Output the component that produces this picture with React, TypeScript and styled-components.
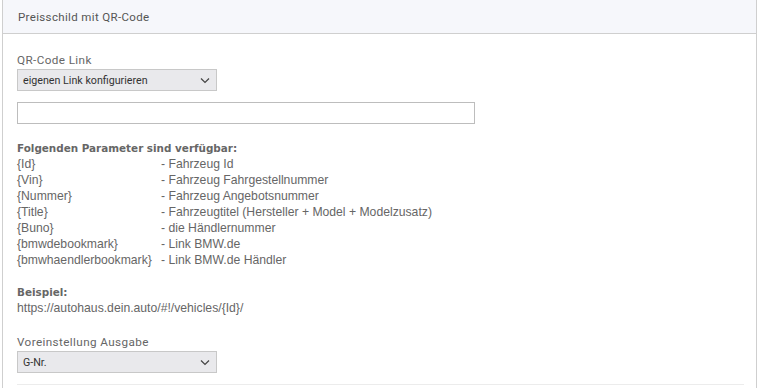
import React from "react";
import styled, { createGlobalStyle } from "styled-components";

const Global = createGlobalStyle`
  html, body { margin: 0; padding: 0; background: #fff; }
  body { font-family: Roboto, "Liberation Sans", sans-serif; }
`;

const Panel = styled.div`
  margin-left: 2px;
  width: 753px;
  height: 388px;
  border-left: 1px solid #cfcfcf;
  border-right: 1px solid #cfcfcf;
  box-sizing: content-box;
  overflow: hidden;
`;

const Header = styled.div`
  height: 33px;
  background: #f6f7fb;
  border-bottom: 1px solid #cfcfcf;
  display: flex;
  align-items: center;
  padding-left: 15px;
  font-family: Roboto, "Liberation Sans", sans-serif;
  font-size: 11.5px;
  letter-spacing: 0.35px;
  color: #555;
`;

const Body = styled.div`
  padding: 18px 11px 0 14px;
  display: flex;
  flex-direction: column;
`;

const Label = styled.div`
  font-family: Roboto, "Liberation Sans", sans-serif;
  font-size: 11.7px;
  letter-spacing: 0.4px;
  color: #666;
  line-height: 16px;
  margin-bottom: 1px;
`;

const SelectBox = styled.div`
  width: 200px;
  height: 22px;
  box-sizing: border-box;
  border: 1px solid #c8c8c8;
  background: #e9e9ec;
  display: flex;
  align-items: center;
  justify-content: space-between;
  padding: 0 6px 0 5px;
  font-family: Roboto, "Liberation Sans", sans-serif;
  font-size: 10.7px;
  color: #333;
`;

const TextInput = styled.div`
  width: 458px;
  height: 22px;
  box-sizing: border-box;
  border: 1px solid #bdbdbd;
  background: #fff;
  margin-top: 11px;
`;

const Info = styled.div`
  margin-top: 16px;
  font-family: "Liberation Sans", Arial, sans-serif;
  font-size: 12.2px;
  line-height: 16px;
  color: #666;
`;

const Strong = styled.div`
  font-family: "DejaVu Sans", "Liberation Sans", sans-serif;
  font-weight: bold;
  font-size: 10.4px;
  color: #666;
  line-height: 16px;
`;

const ParamRow = styled.div`
  display: grid;
  grid-template-columns: 144px auto;
  white-space: nowrap;
`;

const Example = styled.div`
  margin-top: 16px;
  font-family: "Liberation Sans", Arial, sans-serif;
  font-size: 12.2px;
  line-height: 16px;
  color: #666;
`;

const Field = styled.div`
  margin-top: 18px;
`;

const Divider = styled.div`
  margin-top: 11px;
  height: 1px;
  width: 727px;
  background: #ececec;
`;

const Chevron = () => (
  <svg width="10" height="7" viewBox="0 0 10 7">
    <path d="M1 1.5 L5 5.5 L9 1.5" fill="none" stroke="#444" strokeWidth="1.2" />
  </svg>
);

const params: [string, string][] = [
  ["{Id}", "- Fahrzeug Id"],
  ["{Vin}", "- Fahrzeug Fahrgestellnummer"],
  ["{Nummer}", "- Fahrzeug Angebotsnummer"],
  ["{Title}", "- Fahrzeugtitel (Hersteller + Model + Modelzusatz)"],
  ["{Buno}", "- die Händlernummer"],
  ["{bmwdebookmark}", "- Link BMW.de"],
  ["{bmwhaendlerbookmark}", "- Link BMW.de Händler"],
];

export default function App() {
  return (
    <>
      <Global />
      <Panel>
        <Header>Preisschild mit QR-Code</Header>
        <Body>
          <Label>QR-Code Link</Label>
          <SelectBox>
            <span>eigenen Link konfigurieren</span>
            <Chevron />
          </SelectBox>
          <TextInput />
          <Info>
            <Strong>Folgenden Parameter sind verfügbar:</Strong>
            {params.map(([k, v]) => (
              <ParamRow key={k}>
                <span>{k}</span>
                <span>{v}</span>
              </ParamRow>
            ))}
          </Info>
          <Example>
            <Strong>Beispiel:</Strong>
            <div>https://autohaus.dein.auto/#!/vehicles/{"{Id}"}/</div>
          </Example>
          <Field>
            <Label>Voreinstellung Ausgabe</Label>
            <SelectBox>
              <span>G-Nr.</span>
              <Chevron />
            </SelectBox>
          </Field>
          <Divider />
        </Body>
      </Panel>
    </>
  );
}
